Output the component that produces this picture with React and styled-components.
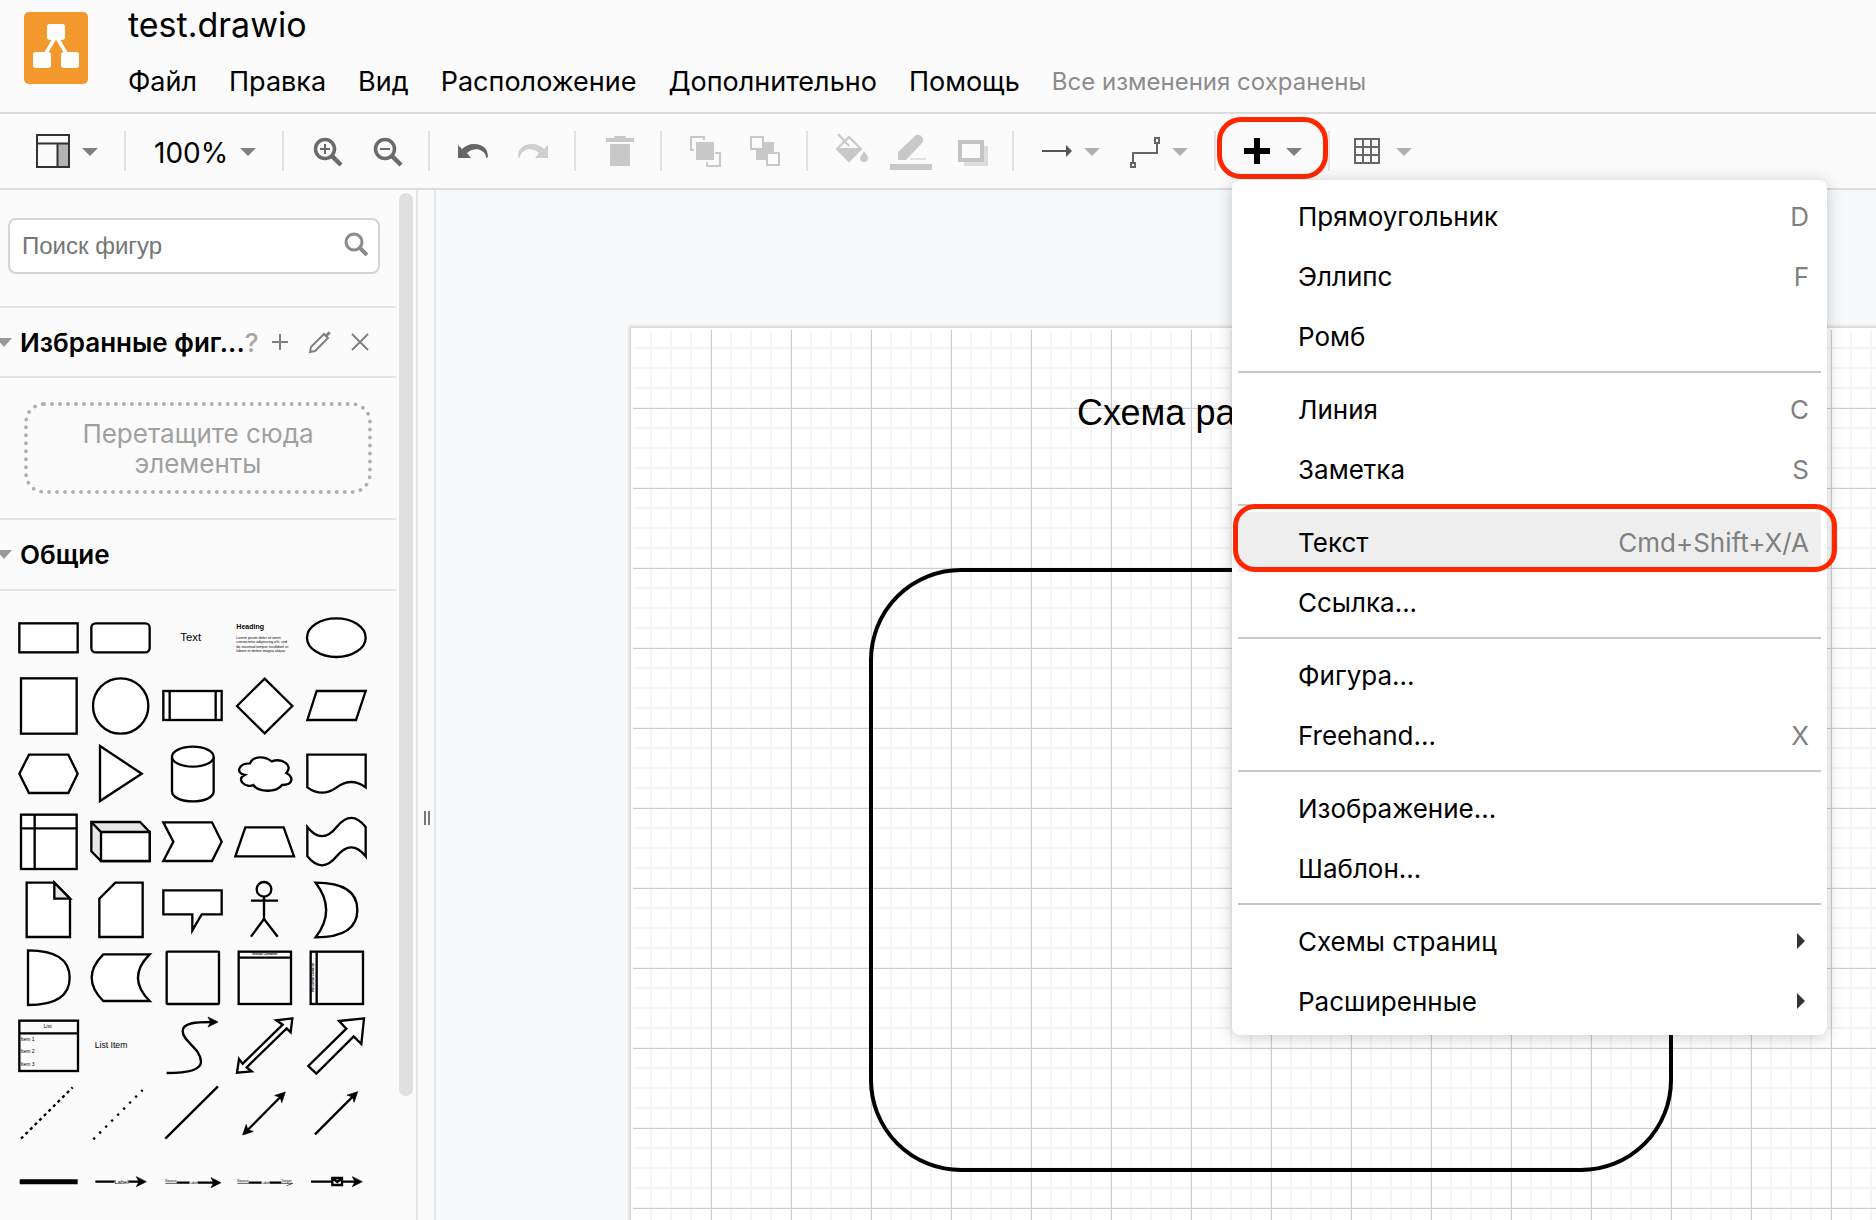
import React from "react";
import styled, { createGlobalStyle, css } from "styled-components";

const GlobalStyle = createGlobalStyle`
  *, *::before, *::after { box-sizing: border-box; }
  body {
    margin: 0;
    background: #fbfbfb;
    color: #000;
    font-family: Inter, "Liberation Sans", sans-serif;
    font-size: 26px;
  }
  button, input { font: inherit; color: inherit; }
`;

const Shell = styled.div`
  height: 100vh;
  display: flex;
  flex-direction: column;
  overflow: hidden;
`;

/* ---------- header ---------- */

const Header = styled.header`
  display: flex;
  gap: 40px;
  height: 114px;
  padding: 0 24px;
  border-bottom: 2px solid #dadce0;
  flex: none;
`;

const Logo = styled.svg`
  width: 64px;
  height: 72px;
  margin-top: 12px;
  flex: none;
`;

const HeaderText = styled.div`
  display: flex;
  flex-direction: column;
`;

const Title = styled.h1`
  margin: 0;
  padding-top: 4px;
  font-size: 34px;
  line-height: 42px;
  font-weight: 400;
`;

const MenuBar = styled.nav`
  display: flex;
  align-items: center;
  gap: 32px;
  height: 40px;
  margin-top: 16px;
  white-space: nowrap;
`;

const MenuLink = styled.button`
  border: 0;
  padding: 0;
  background: none;
  font-size: 27px;
  line-height: 40px;
`;

const Status = styled.span`
  font-size: 24px;
  line-height: 40px;
  color: #8c8c8c;
`;

/* ---------- toolbar ---------- */

const Toolbar = styled.div`
  display: flex;
  align-items: center;
  height: 76px;
  padding: 0 36px;
  border-bottom: 2px solid #dadce0;
  flex: none;
`;

const ToolGroup = styled.div`
  display: flex;
  align-items: center;
  gap: 28px;
`;

const Divider = styled.span`
  width: 2px;
  height: 40px;
  margin: 0 26px;
  background: #e2e2e2;
  flex: none;
`;

const ToolButton = styled.button`
  position: relative;
  display: flex;
  align-items: center;
  gap: 12px;
  height: 40px;
  padding: 0;
  border: 0;
  background: none;
`;

const ZoomValue = styled.span`
  width: 76px;
  padding: 3px 0 0 2px;
  font-size: 28px;
  line-height: 34px;
  text-align: center;
`;

const ToolIcon = styled.svg`
  width: ${(p) => p.$w || 32}px;
  height: 32px;
  overflow: visible;
  flex: none;
`;

const CaretIcon = styled.svg`
  width: 16px;
  height: 8px;
  margin-top: 2px;
  fill: ${(p) => p.$color || "#808080"};
  flex: none;
`;

const InsertAnchor = styled.div`
  position: relative;
  z-index: 2;
`;

const ring = css`
  content: "";
  position: absolute;
  border: 5px solid #ff2600;
  pointer-events: none;
`;

const InsertButton = styled(ToolButton)`
  &::after {
    ${ring}
    inset: -14px -26px -8px -25px;
    border-radius: 24px;
  }
`;

/* ---------- insert menu ---------- */

const Popup = styled.div`
  position: absolute;
  top: 49px;
  left: -10px;
  width: 595px;
  padding: 6px 6px 4px;
  border-radius: 8px;
  background: #fff;
  box-shadow: 0 2px 16px rgba(60, 64, 67, 0.28);
`;

const PopupItem = styled.button`
  position: relative;
  display: flex;
  align-items: center;
  justify-content: space-between;
  width: 100%;
  height: 60px;
  padding: 0 12px 0 60px;
  border: 0;
  background: ${(p) => (p.$active ? "#eee" : "none")};
  text-align: left;
  ${(p) =>
    p.$active &&
    css`
      &::after {
        ${ring}
        inset: -8px -16px 0 -5px;
        border-radius: 22px;
      }
    `}
`;

const Shortcut = styled.span`
  color: #808080;
`;

const SubArrow = styled.svg`
  width: 8px;
  height: 16px;
  margin-right: 4px;
  fill: #333;
`;

const PopupRule = styled.hr`
  height: 2px;
  margin: 5px 0 6px;
  border: 0;
  background: #c8c8c8;
`;

/* ---------- body ---------- */

const Body = styled.div`
  display: flex;
  flex: 1;
  min-height: 0;
`;

const Sidebar = styled.aside`
  display: flex;
  width: 418px;
  border-right: 2px solid #e5e5e5;
  overflow: hidden;
  flex: none;
`;

const SidebarContent = styled.div`
  width: 396px;
  flex: none;
`;

const ScrollTrack = styled.div`
  width: 17px;
  padding: 3px 0 0 3px;
`;

const ScrollThumb = styled.div`
  width: 14px;
  height: 903px;
  border-radius: 7px;
  background: #e0e0e0;
`;

const SearchArea = styled.div`
  height: 118px;
  padding: 28px 16px 0 8px;
  border-bottom: 2px solid #e5e5e5;
`;

const SearchBox = styled.label`
  display: flex;
  align-items: center;
  height: 56px;
  padding: 0 10px 0 12px;
  border: 2px solid #d5d5d5;
  border-radius: 8px;
  background: #fff;
`;

const SearchInput = styled.input`
  flex: 1;
  min-width: 0;
  border: 0;
  padding: 0;
  outline: 0;
  background: none;
  font-family: "Liberation Sans", sans-serif;
  font-size: 24px;
  &::placeholder { color: #757575; opacity: 1; }
`;

const SearchGlyph = styled.svg`
  width: 24px;
  height: 24px;
  margin-bottom: 4px;
  flex: none;
`;

const SectionHead = styled.div`
  display: flex;
  align-items: center;
  height: ${(p) => p.$h}px;
  padding-right: 24px;
  border-bottom: 2px solid #e5e5e5;
`;

const SectionToggle = styled.button`
  display: flex;
  align-items: center;
  gap: 8px;
  min-width: 0;
  border: 0;
  padding: 0;
  background: none;
  font-weight: 600;
  white-space: nowrap;
`;

const SectionArrow = styled.svg`
  width: 12px;
  height: 9px;
  fill: #999;
  flex: none;
`;

const HelpButton = styled.button`
  border: 0;
  padding: 0;
  background: none;
  color: #a6a6a6;
  font-weight: 500;
`;

const SectionActions = styled.div`
  display: flex;
  align-items: center;
  gap: 16px;
  margin-left: auto;
`;

const SmallAction = styled.button`
  display: flex;
  align-items: center;
  justify-content: center;
  width: 24px;
  height: 24px;
  border: 0;
  padding: 0;
  background: none;
`;

const DropArea = styled.div`
  height: 142px;
  padding: 24px;
  border-bottom: 2px solid #e5e5e5;
`;

const DropBox = styled.div`
  display: flex;
  align-items: center;
  justify-content: center;
  height: 92px;
  padding: 2px 40px 0;
  border: 4px dotted #b0b0b0;
  border-radius: 20px;
  color: #a0a0a0;
  line-height: 30px;
  text-align: center;
`;

const Palette = styled.div`
  display: grid;
  grid-template-columns: repeat(5, 72px);
  grid-auto-rows: 68px;
  padding: 12px 0 0 13px;
`;

const ShapeButton = styled.button`
  display: block;
  border: 0;
  padding: 0;
  background: none;
`;

const ShapeSvg = styled.svg`
  display: block;
  width: 72px;
  height: 68px;
  fill: #fff;
  stroke: #000;
  stroke-width: 7;
  text {
    fill: #000;
    stroke: none;
    font-family: "Liberation Sans", sans-serif;
  }
`;

const Splitter = styled.div`
  display: flex;
  align-items: center;
  justify-content: center;
  gap: 2px;
  width: 18px;
  padding-left: 2px;
  border-right: 2px solid #e5e5e5;
  flex: none;
`;

const Grip = styled.span`
  width: 2px;
  height: 14px;
  margin-top: 226px;
  background: #777;
`;

const Canvas = styled.main`
  flex: 1;
  min-width: 0;
  padding: 138px 0 0 195px;
  background: #f8f9fb;
  overflow: hidden;
`;

const Page = styled.div`
  position: relative;
  width: 1654px;
  height: 2338px;
  padding: 2px;
  background: #fff;
  box-shadow: 0 0 3px 2px #d4d4d4;
`;

const Grid = styled.div`
  height: 100%;
  background-image:
    linear-gradient(to right, #cdcdcd 1px, transparent 1px),
    linear-gradient(to bottom, #cdcdcd 1px, transparent 1px),
    linear-gradient(to right, #f5f5f5 2px, transparent 2px),
    linear-gradient(to bottom, #f5f5f5 2px, transparent 2px);
  background-size: 80px 80px, 80px 80px, 20px 20px, 20px 20px;
  background-position: 78px 78px, 78px 78px, 17px 17px, 17px 17px;
`;

const RoundedNode = styled.div`
  position: absolute;
  left: 238px;
  top: 240px;
  width: 804px;
  height: 604px;
  border: 4px solid #000;
  border-radius: 92px;
`;

const TextNode = styled.div`
  position: absolute;
  left: 446px;
  top: 64px;
  font-family: "Liberation Sans", sans-serif;
  font-size: 36px;
  line-height: 42px;
  white-space: nowrap;
`;

/* ---------- icons ---------- */

const Caret = ({ color }) => (
  <CaretIcon viewBox="0 0 16 8" $color={color} aria-hidden="true">
    <path d="M0 0h16L8 8z" />
  </CaretIcon>
);

const SidebarIcon = () => (
  <ToolIcon $w={34} viewBox="0 0 34 32">
    <rect x="22" y="9" width="11" height="23" fill="#b3b3b3" />
    <path d="M1 0h32v32H1zM1 8.500h32M21.500 8.500V32" fill="none" stroke="#333" strokeWidth="2" />
  </ToolIcon>
);

const ZoomIcon = ({ plus }) => (
  <ToolIcon viewBox="0 0 32 32" fill="none" stroke="#6a6a6a">
    <circle cx="15" cy="14" r="9.500" strokeWidth="3.500" />
    <path d="M22 21l9 9" strokeWidth="4.500" />
    <path d={plus ? "M10 14h10M15 9v10" : "M10 14h10"} strokeWidth="2" />
  </ToolIcon>
);

const UndoIcon = ({ flip }) => (
  <ToolIcon viewBox="0 0 32 32" fill={flip ? "#cfcfcf" : "#666"}>
    <path
      transform={flip ? "translate(34 0) scale(-1 1)" : undefined}
      d="M2 10v13h13l-4-5c4-4 11-5 15-2 3 2 4 4 4 7l2-1C32 14 27 9 18 9c-5 0-9 2-12 5z"
    />
  </ToolIcon>
);

const TrashIcon = () => (
  <ToolIcon viewBox="0 0 32 32" fill="#c8c8c8">
    <path d="M4 3h8l1-2h10l1 2h8v4H4zM8 9h20v22H8z" />
  </ToolIcon>
);

const FrontIcon = () => (
  <ToolIcon viewBox="0 0 32 32" fill="none" stroke="#c8c8c8" strokeWidth="2">
    <path d="M16 5V2H3v13h3M27 18h5v13H19v-4" />
    <rect x="9" y="8" width="16" height="16" fill="#c8c8c8" />
  </ToolIcon>
);

const BackIcon = () => (
  <ToolIcon viewBox="0 0 32 32">
    <rect x="8" y="7" width="18" height="18" fill="#c8c8c8" />
    <path d="M3 2h12v12H3zM19 18h12v12H19z" fill="#fbfbfb" stroke="#c8c8c8" strokeWidth="2" />
  </ToolIcon>
);

const BucketIcon = () => (
  <ToolIcon viewBox="0 0 32 32">
    <path d="M4 -1l11 12M15 2L3 14l12 12 12-12z" fill="none" stroke="#c8c8c8" strokeWidth="2" />
    <path d="M3 13h24L15 27zM30 16c3 4 4 6 4 7a4 4 0 0 1-8 0c0-1 2-3 4-7z" fill="#c8c8c8" />
  </ToolIcon>
);

const LineColorIcon = () => (
  <ToolIcon viewBox="0 0 32 32" fill="#c8c8c8">
    <path d="M4 25v-8L21 1c4-4 11 3 7 7L12 25zM-4 29h42v6H-4z" />
    <path d="M16 23h16v2H16z" opacity="0.500" />
  </ToolIcon>
);

const ShadowIcon = () => (
  <ToolIcon viewBox="0 0 32 32">
    <rect x="10" y="11" width="24" height="20" fill="#dedede" />
    <rect x="6" y="7" width="22" height="18" fill="#fbfbfb" stroke="#c4c4c4" strokeWidth="4" />
  </ToolIcon>
);

const ArrowIcon = () => (
  <ToolIcon viewBox="0 0 32 32">
    <path d="M2 16h25" stroke="#555" strokeWidth="2" />
    <path d="M26 10l6 6-6 6z" fill="#555" />
  </ToolIcon>
);

const WaypointsIcon = () => (
  <ToolIcon viewBox="0 0 32 32" fill="none" stroke="#666" strokeWidth="2">
    <path d="M5 27V18h24V8" />
    <path d="M3 28h4v4H3zM27 3h4v5h-4z" />
  </ToolIcon>
);

const PlusIcon = () => (
  <ToolIcon viewBox="0 0 32 32">
    <path d="M2 16h26M15 3v26" stroke="#000" strokeWidth="6" />
  </ToolIcon>
);

const TableIcon = () => (
  <ToolIcon $w={28} viewBox="0 0 28 32" fill="none" stroke="#666" strokeWidth="2">
    <path d="M-1 4h24v24H-1zM-1 12h24M-1 20h24M7 4v24M15 4v24" />
  </ToolIcon>
);

/* ---------- palette shapes, centred on the origin ---------- */

const Head = ({ x, y, a = 0 }) => (
  <path
    d="M0 0L-30 -15L-22 0L-30 15Z"
    transform={`translate(${x} ${y}) rotate(${a})`}
    fill="#000"
    strokeWidth="2"
  />
);

const lorem = [
  "Lorem ipsum dolor sit amet,",
  "consectetur adipisicing elit, sed",
  "do eiusmod tempor incididunt ut",
  "labore et dolore magna aliqua.",
];

const shapes = [
  ["Rectangle", <rect x="-88" y="-41" width="175" height="87" />],
  ["Rounded Rectangle", <rect x="-88" y="-41" width="175" height="87" rx="13" />],
  ["Text", <text x="-37" y="11" fontSize="34">Text</text>],
  ["Textbox", (
    <g>
      <text x="-85" y="-24" fontSize="21" fontWeight="700">Heading</text>
      {lorem.map((t, i) => (
        <text key={t} x="-85" y={6 + i * 13} fontSize="11">{t}</text>
      ))}
    </g>
  )],
  ["Ellipse", <ellipse cx="-1" cy="2" rx="88" ry="58" />],
  ["Square", <rect x="-83" y="-80" width="167" height="166" />],
  ["Circle", <circle cx="0" cy="3" r="83" />],
  ["Process", <g><rect x="-88" y="-42" width="175" height="87" /><path d="M-69 -42V45M69 -42V45" /></g>],
  ["Diamond", <path d="M-83 3L0 -79L83 3L0 85Z" />],
  ["Parallelogram", <path d="M-60 -42H87L58 45H-88Z" />],
  ["Hexagon", <path d="M-88 2L-59 -55H59L87 2L59 60H-59Z" />],
  ["Triangle", <path d="M-62 -81L63 2L-62 84Z" />],
  ["Cylinder", (
    <g>
      <path d="M-62 -49V55C-62 95 63 95 63 55V-49" />
      <ellipse cx="0.500" cy="-49" rx="62.500" ry="30" />
    </g>
  )],
  ["Cloud", <path d="M-44 -29C-79 -29 -88 0 -60 6C-88 19 -56 47 -34 36C-18 59 35 59 52 36C87 36 87 12 65 0C87 -23 52 -46 21 -35C0 -52 -35 -52 -44 -29Z" />],
  ["Document", <path d="M-88 -55H87V43Q44 11 0 43T-88 43Z" />],
  ["Internal Storage", <g><rect x="-83" y="-79" width="167" height="163" /><path d="M-42 -79V84M-83 -38H84" /></g>],
  ["Cube", (
    <g>
      <path d="M-88 -57H58L87 -27V60H-59L-88 31Z" fill="#e6e6e6" />
      <path d="M-88 -57L-59 -27H87V60H-59V-27" />
    </g>
  )],
  ["Step", <path d="M-88 -56H58L87 2L58 60H-88L-58 2Z" />],
  ["Trapezoid", <path d="M-58 -41H57L88 46H-88Z" />],
  ["Tape", <path d="M-88 -42Q-44 13 0 -42T87 -42V46Q44 -8 0 46T-88 46Z" />],
  ["Note", <g><path d="M-66 -79H17L64 -31V84H-66Z" /><path d="M17 -79V-31H64Z" fill="#e6e6e6" /></g>],
  ["Card", <path d="M-16 -79H66V84H-64V-31Z" />],
  ["Callout", <path d="M-88 -56H87V16H27L-1 64V16H-88Z" />],
  ["Actor", <g><circle cx="-2" cy="-59" r="22" /><path d="M-2 -36V30M-41 -25H40M-41 83L-2 30L39 83" fill="none" /></g>],
  ["Or", <path d="M-63 -79Q62 -79 62 3T-63 85Q0 3 -63 -79Z" />],
  ["And", <path d="M-62 -80Q63 -80 63 2T-62 84Z" />],
  ["Data Storage", <path d="M-52 -68H87Q17 2 87 72H-52Q-122 2 -52 -68Z" />],
  ["Container", <rect x="-78" y="-76" width="157" height="157" rx="2" fill="none" />],
  ["Vertical Container", (
    <g>
      <rect x="-78" y="-76" width="157" height="157" fill="none" />
      <path d="M-78 -58H79" />
      <text x="0" y="-65" fontSize="9" fontWeight="700" textAnchor="middle">Vertical Container</text>
    </g>
  )],
  ["Horizontal Container", (
    <g>
      <rect x="-78" y="-76" width="157" height="157" fill="none" />
      <path d="M-60 -76V81" />
      <text fontSize="9" fontWeight="700" textAnchor="middle" transform="translate(-68 0) rotate(-90)">Horizontal Container</text>
    </g>
  )],
  ["List", (
    <g>
      <rect x="-88" y="-73" width="176" height="151" fill="none" />
      <path d="M-88 -35H88" />
      <text x="-3" y="-51" fontSize="15" textAnchor="middle">List</text>
      <text x="-84" y="-12" fontSize="15">Item 1</text>
      <text x="-84" y="24" fontSize="15">Item 2</text>
      <text x="-84" y="62" fontSize="15">Item 3</text>
    </g>
  )],
  ["List Item", <text x="-78" y="9" fontSize="26">List Item</text>],
  ["Curve", <g><path d="M-78 84C-10 84 25 72 25 50C25 10 -30 -10 -30 -42C-30 -66 10 -69 55 -69" fill="none" /><Head x={76} y={-69} /></g>],
  ["Bidirectional Arrow", <path d="M83 -80L35 -74L54 -61L-66 56L-77 42L-83 83L-39 79L-54 67L66 -50L78 -38Z" />],
  ["Arrow", <path d="M82 -80L7 -72L29 -49L-85 63L-61 86L51 -26L74 -3Z" />],
  ["Dashed Line", <path d="M-83 77L72 -77" strokeDasharray="9 10.400" />],
  ["Dotted Line", <path d="M-82 79L66 -69" strokeDasharray="7 18.400" />],
  ["Line", <path d="M-82 77L76 -80" />],
  ["Bidirectional Connector", <g><path d="M-54 54L50 -51" /><Head x={62} y={-63} a={-45} /><Head x={-66} y={66} a={135} /></g>],
  ["Directional Connector", <g><path d="M-65 64L51 -52" /><Head x={63} y={-64} a={-45} /></g>],
  ["Link", <path d="M-87 2H87" strokeWidth="15" />],
  ["Connector with Label", (
    <g>
      <path d="M-76 2H-18M23 2H60" />
      <Head x={77} y={2} />
      <text x="-18" y="9" fontSize="17">Label</text>
    </g>
  )],
  ["Connector with 2 Labels", (
    <g>
      <path d="M-82 7H-48" strokeWidth="2" />
      <path d="M-48 5H-10M15 5H65" />
      <Head x={85} y={5} />
      <text x="-83" y="2" fontSize="11">Source</text>
      <text x="-10" y="8" fontSize="10">Label</text>
    </g>
  )],
  ["Connector with 3 Labels", (
    <g>
      <path d="M-82 7H-48M50 7H84L66 14" strokeWidth="2" />
      <path d="M-48 5H-10M15 5H50" />
      <text x="-83" y="2" fontSize="11">Source</text>
      <text x="-10" y="8" fontSize="10">Label</text>
      <text x="50" y="2" fontSize="11">Target</text>
    </g>
  )],
  ["Connector with Symbol", (
    <g>
      <path d="M-77 2H60" />
      <Head x={77} y={2} />
      <path d="M-13 -9H16V12H-13ZM-13 -9L2 3L16 -9" />
    </g>
  )],
];

/* ---------- data ---------- */

const menus = ["Файл", "Правка", "Вид", "Расположение", "Дополнительно", "Помощь"];

const insertMenu = [
  [["Прямоугольник", "D"], ["Эллипс", "F"], ["Ромб"]],
  [["Линия", "C"], ["Заметка", "S"]],
  [["Текст", "Cmd+Shift+X/A", "active"], ["Ссылка..."]],
  [["Фигура..."], ["Freehand...", "X"]],
  [["Изображение..."], ["Шаблон..."]],
  [["Схемы страниц", null, "sub"], ["Расширенные", null, "sub"]],
];

const InsertMenu = () => (
  <Popup role="menu">
    {insertMenu.map((group, g) => (
      <React.Fragment key={g}>
        {g > 0 && <PopupRule />}
        {group.map(([label, key, kind]) => (
          <PopupItem key={label} role="menuitem" $active={kind === "active"}>
            {label}
            {key && <Shortcut>{key}</Shortcut>}
            {kind === "sub" && (
              <SubArrow viewBox="0 0 8 16"><path d="M0 0l8 8-8 8z" /></SubArrow>
            )}
          </PopupItem>
        ))}
      </React.Fragment>
    ))}
  </Popup>
);

export default function App() {
  return (
    <Shell>
      <GlobalStyle />
      <Header>
        <Logo viewBox="0 0 64 72">
          <rect width="64" height="72" rx="5" fill="#f2982c" />
          <path d="M32 24L19 46M32 24l13 22" stroke="#fff" strokeWidth="3.500" />
          <g fill="#fff">
            <rect x="23" y="12" width="18" height="16" rx="3" />
            <rect x="9" y="40" width="18" height="16" rx="3" />
            <rect x="37" y="40" width="18" height="16" rx="3" />
          </g>
        </Logo>
        <HeaderText>
          <Title>test.drawio</Title>
          <MenuBar>
            {menus.map((m) => <MenuLink key={m}>{m}</MenuLink>)}
            <Status>Все изменения сохранены</Status>
          </MenuBar>
        </HeaderText>
      </Header>

      <Toolbar role="toolbar">
        <ToolButton aria-label="Вид"><SidebarIcon /><Caret /></ToolButton>
        <Divider />
        <ToolButton><ZoomValue>100%</ZoomValue><Caret /></ToolButton>
        <Divider />
        <ToolGroup>
          <ToolButton aria-label="Увеличить"><ZoomIcon plus /></ToolButton>
          <ToolButton aria-label="Уменьшить"><ZoomIcon /></ToolButton>
        </ToolGroup>
        <Divider />
        <ToolGroup>
          <ToolButton aria-label="Отменить"><UndoIcon /></ToolButton>
          <ToolButton aria-label="Повторить"><UndoIcon flip /></ToolButton>
        </ToolGroup>
        <Divider />
        <ToolButton aria-label="Удалить"><TrashIcon /></ToolButton>
        <Divider />
        <ToolGroup>
          <ToolButton aria-label="На передний план"><FrontIcon /></ToolButton>
          <ToolButton aria-label="На задний план"><BackIcon /></ToolButton>
        </ToolGroup>
        <Divider />
        <ToolGroup>
          <ToolButton aria-label="Цвет заливки"><BucketIcon /></ToolButton>
          <ToolButton aria-label="Цвет линии"><LineColorIcon /></ToolButton>
          <ToolButton aria-label="Тень"><ShadowIcon /></ToolButton>
        </ToolGroup>
        <Divider />
        <ToolGroup>
          <ToolButton aria-label="Соединение"><ArrowIcon /><Caret color="#b0b0b0" /></ToolButton>
          <ToolButton aria-label="Точки маршрута"><WaypointsIcon /><Caret color="#b0b0b0" /></ToolButton>
        </ToolGroup>
        <Divider />
        <InsertAnchor>
          <InsertButton aria-label="Вставить"><PlusIcon /><Caret /></InsertButton>
          <InsertMenu />
        </InsertAnchor>
        <Divider />
        <ToolButton aria-label="Таблица"><TableIcon /><Caret color="#b0b0b0" /></ToolButton>
      </Toolbar>

      <Body>
        <Sidebar>
          <SidebarContent>
            <SearchArea>
              <SearchBox>
                <SearchInput type="text" placeholder="Поиск фигур" aria-label="Поиск фигур" />
                <SearchGlyph viewBox="0 0 24 24" fill="none" stroke="#8a8a8a">
                  <circle cx="10" cy="10" r="8" strokeWidth="3" />
                  <path d="M16 16l7 7" strokeWidth="4" />
                </SearchGlyph>
              </SearchBox>
            </SearchArea>
            <SectionHead $h={70}>
              <SectionToggle>
                <SectionArrow viewBox="0 0 12 9"><path d="M-4 0h16L4 9z" /></SectionArrow>
                Избранные фиг...
              </SectionToggle>
              <HelpButton>?</HelpButton>
              <SectionActions>
                <SmallAction aria-label="Добавить">
                  <svg width="24" height="24" stroke="#808080" strokeWidth="2"><path d="M4 12h16M12 4v16" /></svg>
                </SmallAction>
                <SmallAction aria-label="Редактировать">
                  <svg width="24" height="24" fill="none" stroke="#808080" strokeWidth="2">
                    <path d="M2 22l1-5L16 4l4 4L7 21z" />
                    <path d="M19 3l2 2" strokeWidth="5" />
                  </svg>
                </SmallAction>
                <SmallAction aria-label="Закрыть">
                  <svg width="24" height="24" stroke="#808080" strokeWidth="2"><path d="M4 4l16 16M20 4L4 20" /></svg>
                </SmallAction>
              </SectionActions>
            </SectionHead>
            <DropArea>
              <DropBox>Перетащите сюда элементы</DropBox>
            </DropArea>
            <SectionHead $h={71}>
              <SectionToggle>
                <SectionArrow viewBox="0 0 12 9"><path d="M-4 0h16L4 9z" /></SectionArrow>
                Общие
              </SectionToggle>
            </SectionHead>
            <Palette>
              {shapes.map(([name, drawing]) => (
                <ShapeButton key={name} aria-label={name}>
                  <ShapeSvg viewBox="-107 -102 216 204">{drawing}</ShapeSvg>
                </ShapeButton>
              ))}
            </Palette>
          </SidebarContent>
          <ScrollTrack><ScrollThumb /></ScrollTrack>
        </Sidebar>
        <Splitter><Grip /><Grip /></Splitter>
        <Canvas>
          <Page>
            <Grid />
            <RoundedNode />
            <TextNode>Схема ра</TextNode>
          </Page>
        </Canvas>
      </Body>
    </Shell>
  );
}
